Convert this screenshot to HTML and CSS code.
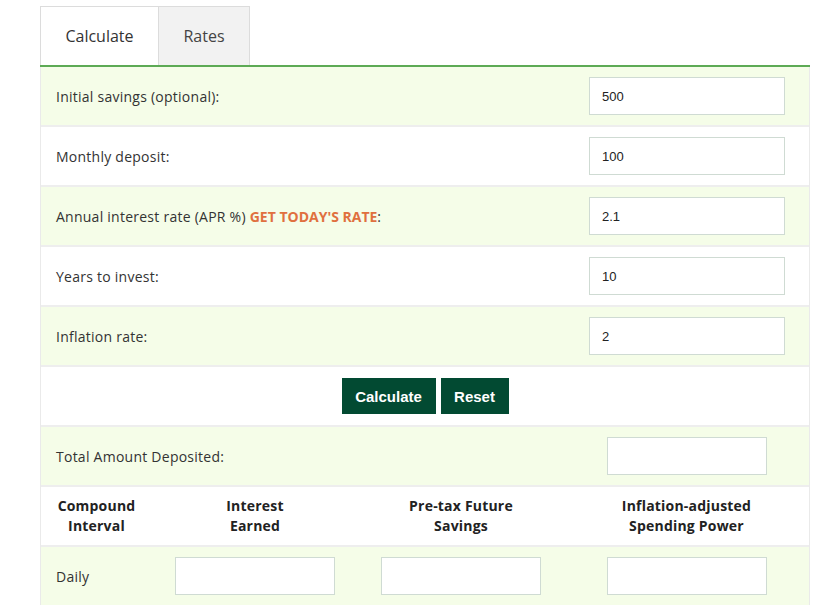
FILE: index.html
```html
<!DOCTYPE html>
<html>
<head>
<meta charset="utf-8">
<link rel="stylesheet" href="styles.css">
</head>
<body>
<div class="wrap">
  <div class="tabs">
    <div class="tab active">Calculate</div>
    <div class="tab">Rates</div>
  </div>
  <div class="panel">
    <div class="row green">
      <div class="label">Initial savings (optional):</div>
      <input class="field" type="text" value="500">
    </div>
    <div class="row">
      <div class="label">Monthly deposit:</div>
      <input class="field" type="text" value="100">
    </div>
    <div class="row green">
      <div class="label">Annual interest rate (APR %) <a class="rate">GET TODAY'S RATE</a>:</div>
      <input class="field" type="text" value="2.1">
    </div>
    <div class="row">
      <div class="label">Years to invest:</div>
      <input class="field" type="text" value="10">
    </div>
    <div class="row green">
      <div class="label">Inflation rate:</div>
      <input class="field" type="text" value="2">
    </div>
    <div class="row buttons">
      <button class="btn btn-calc">Calculate</button>
      <button class="btn btn-reset">Reset</button>
    </div>
    <div class="grid-row green">
      <div class="label span3">Total Amount Deposited:</div>
      <div class="cell"><input class="out" type="text"></div>
    </div>
    <div class="grid-row head">
      <div class="cell">Compound<br>Interval</div>
      <div class="cell">Interest<br>Earned</div>
      <div class="cell">Pre-tax Future<br>Savings</div>
      <div class="cell">Inflation-adjusted<br>Spending Power</div>
    </div>
    <div class="grid-row green">
      <div class="label">Daily</div>
      <div class="cell"><input class="out" type="text"></div>
      <div class="cell"><input class="out" type="text"></div>
      <div class="cell"><input class="out" type="text"></div>
    </div>
  </div>
</div>
</body>
</html>
```

FILE: styles.css
```css
html, body {
  margin: 0;
  padding: 0;
  background: #fff;
}
body {
  font-family: "Open Sans", "Liberation Sans", sans-serif;
  color: #333;
}
.wrap {
  width: 770px;
  margin-left: 40px;
  padding-top: 6px;
}
.tabs {
  display: flex;
  height: 59px;
  border-bottom: 2px solid #5daa55;
}
.tab {
  box-sizing: border-box;
  height: 59px;
  display: flex;
  align-items: center;
  justify-content: center;
  font-size: 16px;
  color: #444;
  border: 1px solid #dcdcdc;
  border-bottom: none;
  background: #f2f2f2;
  width: 92px;
}
.tab.active {
  width: 118px;
  background: #fff;
  color: #333;
  border-right: none;
}
.panel {
  border-left: 1px solid #eaeaea;
  border-right: 1px solid #eaeaea;
}
.row {
  box-sizing: border-box;
  height: 60px;
  border-bottom: 2px solid #eeeeee;
  display: flex;
  align-items: center;
  justify-content: space-between;
  padding: 0 24px 0 15px;
}
.green {
  background: #f5fde8;
}
.label {
  font-size: 14px;
  color: #333;
  letter-spacing: 0.25px;
}
.rate {
  color: #e0703f;
  font-weight: 700;
  text-decoration: none;
  letter-spacing: 0;
}
.field, .out {
  box-sizing: border-box;
  height: 38px;
  border: 1px solid #cfdbd3;
  background: #fff;
  font-family: "Liberation Sans", Arial, sans-serif;
  font-size: 13px;
  color: #222;
  padding: 0 12px;
  margin: 0;
  outline: none;
}
.field {
  width: 196px;
}
.buttons {
  justify-content: center;
  gap: 5px;
  padding: 0;
}
.btn {
  height: 36px;
  border: none;
  background: #024a32;
  color: #fff;
  font-family: "Liberation Sans", Arial, sans-serif;
  font-weight: 700;
  font-size: 15px;
  padding: 0;
  margin: 0;
}
.btn-calc { width: 94px; }
.btn-reset { width: 68px; }
.grid-row {
  box-sizing: border-box;
  height: 60px;
  border-bottom: 2px solid #eeeeee;
  display: grid;
  grid-template-columns: 111px 206px 206px 245px;
  align-items: center;
}
.grid-row .label {
  padding-left: 15px;
}
.span3 {
  grid-column: span 3;
}
.cell {
  display: flex;
  justify-content: center;
  text-align: center;
}
.head .cell {
  font-weight: 700;
  font-size: 14px;
  line-height: 20px;
  color: #222;
  letter-spacing: 0.2px;
}
.out {
  width: 160px;
}
```
